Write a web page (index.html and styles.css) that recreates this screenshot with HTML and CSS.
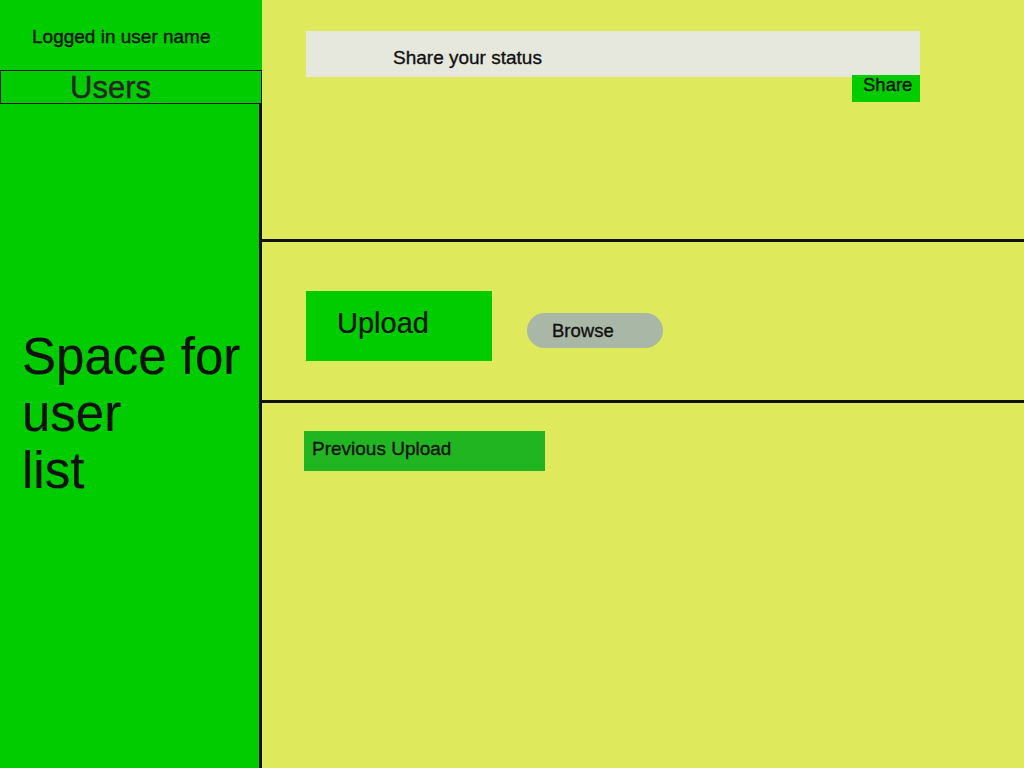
FILE: index.html
```html
<!DOCTYPE html>
<html>
<head>
<meta charset="utf-8">
<link rel="stylesheet" href="styles.css">
</head>
<body>
<div class="page">
  <aside class="sidebar">
    <div class="user-name">Logged in user name</div>
    <div class="users-title">Users</div>
    <div class="user-list">Space for<br>user<br>list</div>
  </aside>
  <main class="main">
    <section class="status-section">
      <div class="status-wrap">
        <div class="status-box">Share your status</div>
        <div class="share-btn">Share</div>
      </div>
    </section>
    <section class="upload-section">
      <div class="upload-btn">Upload</div>
      <div class="browse-btn">Browse</div>
    </section>
    <section class="previous-section">
      <div class="previous-box">Previous Upload</div>
    </section>
  </main>
</div>
</body>
</html>
```

FILE: styles.css
```css
html, body {
  margin: 0;
  padding: 0;
}
body {
  font-family: "Liberation Sans", Arial, sans-serif;
  color: #111;
  background: #dee95c;
  -webkit-text-stroke: 0.35px currentColor;
}
.page {
  display: flex;
  width: 1024px;
  height: 768px;
  overflow: hidden;
}
.sidebar {
  width: 262px;
  flex: 0 0 262px;
  display: flex;
  flex-direction: column;
  background: #00cc00;
}
.user-name {
  height: 70px;
  box-sizing: border-box;
  padding: 26px 0 0 32px;
  font-size: 19px;
}
.users-title {
  height: 34px;
  box-sizing: border-box;
  border: 1px solid #111;
  padding: 1px 0 0 69px;
  font-size: 31px;
  line-height: 31px;
  color: #262626;
}
.user-list {
  flex: 1;
  border-right: 3px solid #111;
  padding: 224px 0 0 22px;
  font-size: 51px;
  line-height: 57px;
  -webkit-text-stroke: 0.2px currentColor;
}
.main {
  flex: 1;
  display: flex;
  flex-direction: column;
}
.status-section {
  height: 242px;
  box-sizing: border-box;
  border-bottom: 3px solid #111;
  padding: 31px 0 0 44px;
}
.status-wrap {
  width: 614px;
  display: flex;
  flex-direction: column;
}
.status-box {
  height: 46px;
  box-sizing: border-box;
  background: #e6e8dd;
  padding: 16px 0 0 87px;
  font-size: 19px;
}
.share-btn {
  align-self: flex-end;
  margin-top: -2px;
  width: 68px;
  height: 27px;
  box-sizing: border-box;
  padding-left: 11px;
  background: #00cc00;
  font-size: 18.5px;
  line-height: 19px;
}
.upload-section {
  height: 161px;
  box-sizing: border-box;
  border-bottom: 3px solid #111;
  padding: 49px 0 0 44px;
  display: flex;
  align-items: flex-start;
}
.upload-btn {
  width: 186px;
  height: 70px;
  box-sizing: border-box;
  padding: 16px 0 0 31px;
  background: #00cc00;
  font-size: 29px;
  -webkit-text-stroke: 0.2px currentColor;
}
.browse-btn {
  margin: 22px 0 0 35px;
  width: 136px;
  height: 35px;
  box-sizing: border-box;
  padding: 7px 0 0 25px;
  border-radius: 18px;
  background: #a9b8a6;
  font-size: 18.5px;
}
.previous-section {
  flex: 1;
  padding: 28px 0 0 42px;
}
.previous-box {
  width: 241px;
  height: 40px;
  box-sizing: border-box;
  padding: 7px 0 0 8px;
  background: #22b522;
  font-size: 19px;
}
```
